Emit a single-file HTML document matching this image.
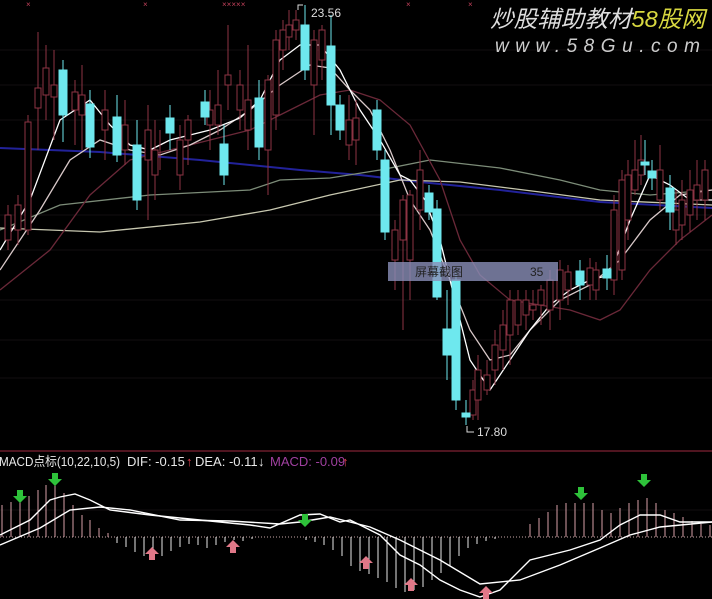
<!DOCTYPE html>
<html><head><meta charset="utf-8"><style>
html,body{margin:0;padding:0;background:#000;width:712px;height:599px;overflow:hidden}
svg{display:block}
text{font-family:"Liberation Sans","Noto Sans CJK SC",sans-serif}
</style></head><body>
<svg width="712" height="599" viewBox="0 0 712 599" xmlns="http://www.w3.org/2000/svg">
<rect width="712" height="599" fill="#000"/>
<g stroke="#120e10" stroke-width="1">
<line x1="0" y1="50" x2="712" y2="50"/><line x1="0" y1="85" x2="712" y2="85"/><line x1="0" y1="120" x2="712" y2="120"/>
<line x1="0" y1="215" x2="712" y2="215"/><line x1="0" y1="250" x2="712" y2="250"/><line x1="0" y1="300" x2="712" y2="300"/>
<line x1="0" y1="340" x2="712" y2="340"/><line x1="0" y1="378" x2="712" y2="378"/><line x1="0" y1="510" x2="712" y2="510"/>
</g>
<line x1="0" y1="451" x2="712" y2="451" stroke="#6a1c2a" stroke-width="1.5"/>
<g fill="#c0405a" font-size="8"><text x="26" y="7">×</text><text x="143" y="7">×</text><text x="222" y="7">×××××</text><text x="406" y="7">×</text><text x="468" y="7">×</text></g>
<g fill="none" stroke-width="1.3">
<polyline stroke="#22229a" stroke-width="2" points="0,148 100,152 200,160 300,170 360,175 420,182 500,190 600,202 712,208"/>
<polyline stroke="#7c8c78" points="0,230 60,205 150,195 250,190 280,180 330,178 380,170 430,160 500,168 560,180 600,190 650,195 712,190"/>
<polyline stroke="#c8c8b0" points="0,228 100,232 200,222 270,210 330,195 400,180 460,182 540,192 600,200 712,205"/>
<polyline stroke="#6a2838" points="0,290 50,250 90,195 130,160 170,150 210,140 250,130 290,110 320,95 350,90 380,100 410,125 440,180 460,240 480,275 510,300 540,305 570,310 600,320 620,310 650,270 680,240 712,215"/>
<polyline stroke="#d8c8c8" points="0,270 40,210 70,160 100,140 130,150 160,155 190,145 220,130 250,110 280,85 310,65 330,68 350,90 370,110 390,150 410,200 430,230 450,280 470,330 490,360 510,355 530,330 560,300 590,285 620,260 650,220 680,195 712,190"/>
<polyline stroke="#ffffff" points="0,250 30,200 60,120 90,100 110,125 130,145 150,150 170,140 190,135 210,130 240,118 260,100 280,60 300,45 320,45 340,70 360,110 380,140 400,175 410,180 425,200 440,240 455,300 470,360 490,390 510,360 530,330 550,305 570,290 590,280 610,275 630,220 650,175 670,185 690,200 712,200"/>
</g>
<g stroke="#8e3444" fill="none" stroke-width="1">
<path d="M8 205V250M18 195V245M28 115V235M38 32V150M46 45V120M54 50V140M75 80V145M82 65V150M105 90V160M125 100V165M148 105V220M155 120V200M160 130V170M180 125V190M188 115V165M210 90V150M218 70V135M228 25V110M240 70V130M248 45V150M268 75V195M276 30V130M283 20V70M289 10V50M296 10V40M314 30V135M322 25V80M349 95V160M356 100V165M395 220V290M403 195V330M410 190V300M420 150V230M473 380V420M478 355V420M487 360V395M495 330V385M503 310V370M510 290V365M518 290V335M526 290V330M533 290V320M541 285V325M550 270V330M560 260V320M568 265V305M590 258V300M596 262V300M614 195V295M622 170V280M628 160V240M635 140V195M641 135V185M660 145V210M676 190V245M682 180V240M690 170V232M697 160V220M705 160V220"/>
<g fill="#000">
<rect x="5" y="215" width="6" height="25"/><rect x="15" y="205" width="6" height="25"/><rect x="25" y="122" width="6" height="108"/><rect x="35" y="88" width="6" height="20"/><rect x="43" y="68" width="6" height="27"/><rect x="51" y="85" width="6" height="12"/><rect x="72" y="92" width="6" height="18"/><rect x="79" y="95" width="6" height="20"/><rect x="102" y="110" width="6" height="20"/><rect x="122" y="125" width="6" height="25"/><rect x="145" y="130" width="6" height="30"/><rect x="152" y="150" width="6" height="25"/><rect x="177" y="140" width="6" height="35"/><rect x="185" y="120" width="6" height="20"/><rect x="207" y="110" width="6" height="15"/><rect x="215" y="105" width="6" height="20"/><rect x="225" y="75" width="6" height="10"/><rect x="237" y="85" width="6" height="25"/><rect x="245" y="100" width="6" height="30"/><rect x="265" y="80" width="6" height="70"/><rect x="273" y="40" width="6" height="75"/><rect x="280" y="30" width="6" height="20"/><rect x="286" y="25" width="6" height="12"/><rect x="293" y="20" width="6" height="10"/><rect x="311" y="40" width="6" height="45"/><rect x="319" y="30" width="6" height="30"/><rect x="346" y="120" width="6" height="25"/><rect x="353" y="118" width="6" height="22"/><rect x="392" y="230" width="6" height="30"/><rect x="400" y="200" width="6" height="40"/><rect x="407" y="195" width="6" height="65"/><rect x="417" y="170" width="6" height="40"/><rect x="470" y="390" width="6" height="25"/><rect x="475" y="370" width="6" height="30"/><rect x="484" y="375" width="6" height="15"/><rect x="492" y="345" width="6" height="25"/><rect x="500" y="325" width="6" height="25"/><rect x="507" y="300" width="6" height="35"/><rect x="515" y="300" width="6" height="25"/><rect x="523" y="300" width="6" height="15"/><rect x="530" y="305" width="6" height="5"/><rect x="538" y="290" width="6" height="15"/><rect x="547" y="280" width="6" height="30"/><rect x="557" y="270" width="6" height="30"/><rect x="565" y="272" width="6" height="18"/><rect x="587" y="268" width="6" height="17"/><rect x="593" y="270" width="6" height="20"/><rect x="611" y="210" width="6" height="70"/><rect x="619" y="180" width="6" height="90"/><rect x="625" y="175" width="6" height="45"/><rect x="632" y="170" width="6" height="20"/><rect x="638" y="160" width="6" height="15"/><rect x="657" y="170" width="6" height="30"/><rect x="673" y="210" width="6" height="20"/><rect x="679" y="200" width="6" height="25"/><rect x="687" y="190" width="6" height="25"/><rect x="694" y="185" width="6" height="15"/><rect x="702" y="170" width="6" height="30"/>
</g></g>
<g stroke="#6ee8ee" fill="#6ee8ee" stroke-width="1">
<path d="M63 60V142M90 90V158M117 95V162M137 120V210M170 105V150M205 90V125M224 125V185M259 80V160M305 5V80M331 15V135M340 95V140M377 100V160M385 150V240M429 185V220M437 200V300M447 290V380M456 270V410M466 400V425M580 260V300M607 255V290M645 140V175M652 160V190M670 175V230"/>
<rect x="59" y="70" width="8" height="45"/><rect x="86" y="104" width="8" height="43"/><rect x="113" y="117" width="8" height="38"/><rect x="133" y="145" width="8" height="55"/><rect x="166" y="118" width="8" height="15"/><rect x="201" y="102" width="8" height="15"/><rect x="220" y="144" width="8" height="31"/><rect x="255" y="98" width="8" height="49"/><rect x="301" y="25" width="8" height="45"/><rect x="327" y="46" width="8" height="59"/><rect x="336" y="105" width="8" height="25"/><rect x="373" y="110" width="8" height="40"/><rect x="381" y="160" width="8" height="72"/><rect x="425" y="193" width="8" height="19"/><rect x="433" y="209" width="8" height="88"/><rect x="443" y="329" width="8" height="26"/><rect x="452" y="280" width="8" height="120"/><rect x="462" y="413" width="8" height="4"/><rect x="576" y="271" width="8" height="14"/><rect x="603" y="269" width="8" height="9"/><rect x="641" y="162" width="8" height="3"/><rect x="648" y="171" width="8" height="7"/><rect x="666" y="188" width="8" height="24"/>
</g>
<path d="M298 10V5H303" stroke="#ddd" fill="none"/>
<text x="311" y="17" fill="#ddd" font-size="12">23.56</text>
<path d="M467 426V432H474" stroke="#ddd" fill="none"/>
<text x="477" y="436" fill="#ddd" font-size="12">17.80</text>
<rect x="388" y="262" width="170" height="19" fill="#8a8fb8" fill-opacity="0.8"/>
<text x="415" y="276" fill="#222" font-size="12">屏幕截图</text>
<text x="530" y="276" fill="#222" font-size="12">35</text>
<text x="490" y="27" fill="#ddd" font-size="23" font-style="italic" font-family="'Noto Sans CJK SC',sans-serif" textLength="215" lengthAdjust="spacingAndGlyphs">炒股辅助教材<tspan fill="#d8d840">58股网</tspan></text>
<text x="495" y="52" fill="#ccc" font-size="19" font-style="italic" textLength="205" lengthAdjust="spacing">www.58Gu.com</text>
<g font-size="13" fill="#e8e8e8">
<text x="-1" y="466" textLength="121" lengthAdjust="spacingAndGlyphs">MACD点标(10,22,10,5)</text>
<text x="127" y="466">DIF: -0.15</text><text x="186" y="466" fill="#e04050">↑</text>
<text x="195" y="466">DEA: -0.11</text><text x="258" y="466">↓</text>
<text x="270" y="466" fill="#a040a0">MACD: -0.09</text><text x="342" y="466" fill="#e04050">↑</text>
</g>
<line x1="0" y1="537" x2="712" y2="537" stroke="#c8a8a8" stroke-dasharray="1,2"/>
<g stroke="#d8a0a8" stroke-width="1">
<path d="M2 537V505M11 537V502M20 537V500M29 537V496M38 537V490M46 537V485M55 537V484M64 537V493M73 537V505M82 537V515M90 537V520M99 537V528M108 537V533M530 537V524M539 537V518M548 537V512M557 537V505M566 537V503M575 537V503M584 537V503M593 537V503M602 537V510M611 537V513M620 537V508M629 537V503M638 537V500M647 537V498M656 537V503M665 537V510M674 537V513M683 537V517M692 537V521M701 537V524M710 537V525"/>
</g>
<g stroke="#e8e8e8" stroke-width="1">
<path d="M117 537V543M126 537V547M135 537V552M144 537V556M153 537V559M162 537V556M171 537V551M180 537V547M189 537V544M198 537V545M207 537V548M216 537V545M225 537V542M234 537V540M243 537V541M252 537V539M306 537V540M315 537V542M324 537V545M333 537V550M342 537V556M351 537V566M360 537V571M369 537V574M378 537V578M387 537V582M396 537V588M405 537V592M414 537V590M423 537V587M432 537V580M441 537V573M450 537V566M459 537V556M468 537V548M477 537V544M486 537V541M495 537V539"/>
</g>
<g fill="none" stroke="#fff" stroke-width="1.4">
<polyline points="0,535 30,520 50,500 60,497 75,494 90,500 110,510 150,515 200,520 250,525 270,528 300,515 320,514 340,522 350,520 380,535 400,555 420,565 440,580 460,590 480,597 500,590 530,560 570,550 600,540 620,525 640,515 660,515 680,522 712,522"/>
<polyline points="0,545 40,528 70,510 100,507 130,510 180,520 230,521 280,524 300,522 330,517 370,527 400,540 440,560 480,584 520,580 560,565 600,548 630,535 660,527 712,522"/>
</g>
<g fill="#2ec23a"><path d="M17 490h6v6h4l-7 7-7-7h4z"/><path d="M52 473h6v6h4l-7 7-7-7h4z"/><path d="M302 514h6v6h4l-7 7-7-7h4z"/><path d="M578 487h6v6h4l-7 7-7-7h4z"/><path d="M641 474h6v6h4l-7 7-7-7h4z"/></g>
<g fill="#e07888"><path d="M149 560h6v-6h4l-7-7-7 7h4z"/><path d="M230 553h6v-6h4l-7-7-7 7h4z"/><path d="M363 569h6v-6h4l-7-7-7 7h4z"/><path d="M408 591h6v-6h4l-7-7-7 7h4z"/><path d="M483 599h6v-6h4l-7-7-7 7h4z"/></g>
</svg>
</body></html>
